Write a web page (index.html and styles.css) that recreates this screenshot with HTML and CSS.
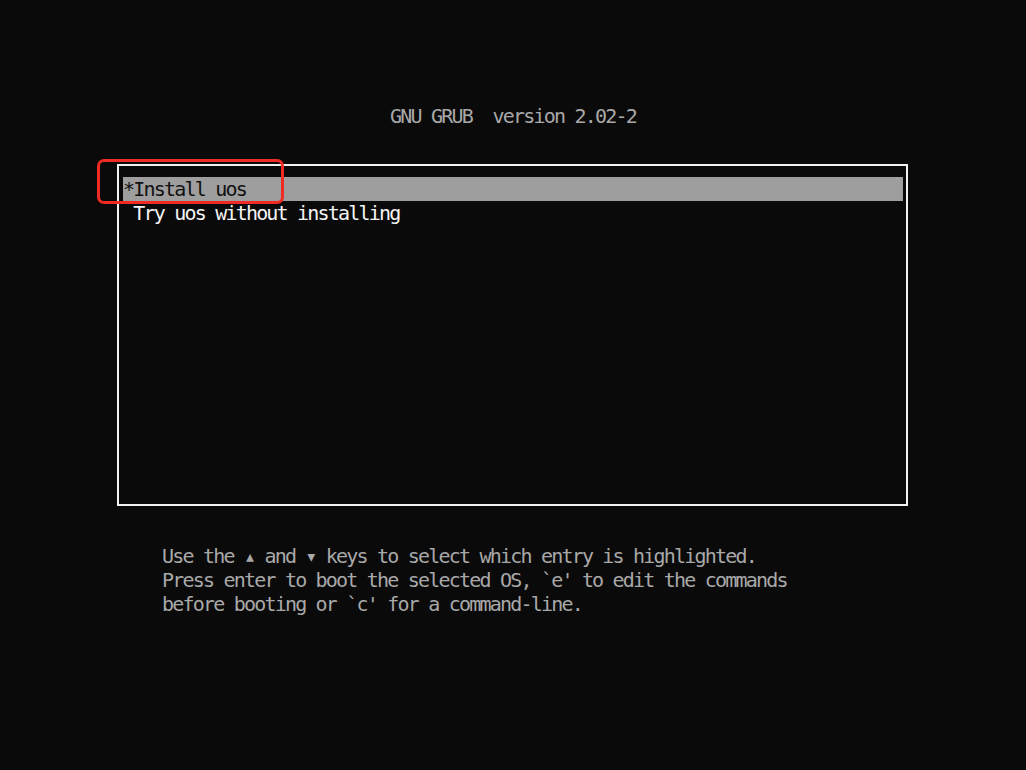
FILE: index.html
```html
<!DOCTYPE html>
<html lang="en">
<head>
    <meta charset="UTF-8">
    <meta name="viewport" content="width=device-width, initial-scale=1.0">
    <title>GNU GRUB</title>
    <link rel="stylesheet" href="styles.css">
</head>
<body>

    <div class="screen">
        <div class="title">GNU GRUB  version 2.02-2</div>

        <!-- Menu des entrées de démarrage -->
        <div class="menu">
            <div class="entry selected">*Install uos</div>
            <div class="entry"> Try uos without installing</div>
            <div class="mark"></div>
        </div>

        <div class="help">
            <div class="line">Use the ▴ and ▾ keys to select which entry is highlighted.</div>
            <div class="line">Press enter to boot the selected OS, `e' to edit the commands</div>
            <div class="line">before booting or `c' for a command-line.</div>
        </div>
    </div>

</body>
</html>
```

FILE: styles.css
```css
html, body {
    margin: 0;
    padding: 0;
    background-color: #0a0a0a;
}

.screen {
    width: 1026px;
    height: 770px;
    font-family: "DejaVu Sans Mono", "Liberation Mono", monospace;
    font-size: 20px;
    letter-spacing: -1.8px;
    line-height: 24px;
}

.title {
    padding-top: 104px;
    text-align: center;
    color: #a8a8a8;
    white-space: pre;
}

.menu {
    position: relative;
    box-sizing: border-box;
    width: 791px;
    height: 342px;
    margin: 36px 0 0 117px;
    padding: 11px 3px 0 4px;
    border: 2px solid #f2f2f2;
}

.entry {
    height: 24px;
    padding-left: 0;
    color: #f4f4f4;
    white-space: pre;
}

.entry.selected {
    background-color: #9e9e9e;
    color: #111;
}

.mark {
    position: absolute;
    left: -22px;
    top: -7px;
    width: 187px;
    height: 45px;
    box-sizing: border-box;
    border: 3px solid #f02a24;
    border-radius: 7px;
}

.help {
    margin-top: 38px;
    padding-left: 162px;
    color: #a8a8a8;
}

.line {
    height: 24px;
    white-space: pre;
}
```
